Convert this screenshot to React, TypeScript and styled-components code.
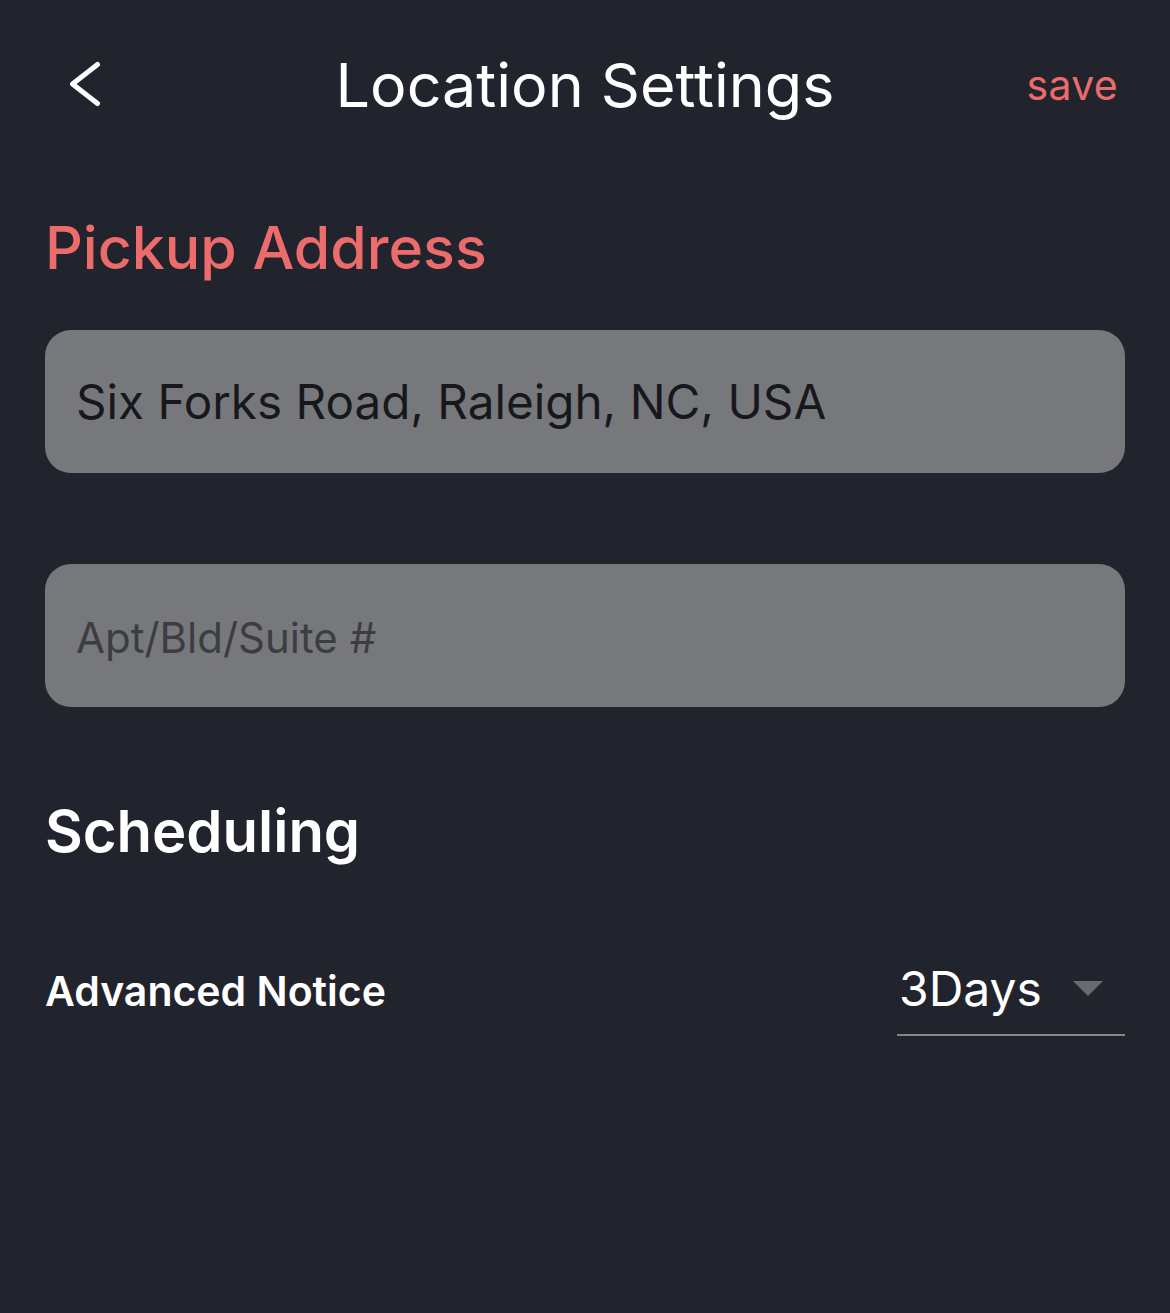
import styled, { createGlobalStyle } from 'styled-components'

const GlobalStyle = createGlobalStyle`
  html, body {
    margin: 0;
    padding: 0;
    background: #22242d;
  }
  body {
    font-family: Inter, "Noto Sans", sans-serif;
    -webkit-font-smoothing: antialiased;
  }
`

const Screen = styled.div`
  width: 1170px;
  min-height: 1313px;
  background: #22242d;
  color: #ffffff;
  box-sizing: border-box;
`

const Header = styled.header`
  position: relative;
  height: 170px;
  display: flex;
  align-items: center;
  justify-content: space-between;
  padding: 0 52px 0 62px;
`

const BackButton = styled.button`
  background: none;
  border: 0;
  padding: 0;
  width: 48px;
  height: 48px;
  display: flex;
  cursor: pointer;
`

const Title = styled.h1`
  position: absolute;
  left: 0;
  right: 0;
  text-align: center;
  margin: 0;
  font-size: 61px;
  font-weight: 400;
  pointer-events: none;
`

const SaveLink = styled.span`
  color: #ec6b6b;
  font-size: 41px;
  font-weight: 400;
  letter-spacing: 0.3px;
`

const Body = styled.main`
  padding: 0 45px;
  display: flex;
  flex-direction: column;
`

const SectionTitle = styled.h2<{ $accent?: boolean }>`
  margin: 0;
  line-height: 72px;
  font-size: ${p => (p.$accent ? 59 : 58)}px;
  font-weight: ${p => (p.$accent ? 500 : 600)};
  color: ${p => (p.$accent ? '#ec6b6b' : '#ffffff')};
`

const FieldWrap = styled.div<{ $gap: number }>`
  margin-top: ${p => p.$gap}px;
`

const Field = styled.input`
  box-sizing: border-box;
  width: 100%;
  height: 143px;
  border: 0;
  border-radius: 26px;
  background: #77787c;
  padding: 0 31px;
  font-family: Inter, "Noto Sans", sans-serif;
  font-size: 47.6px;
  color: #17181c;
  outline: none;

  &::placeholder {
    color: #3c3d42;
    font-size: 42px;
  }
`

const Row = styled.div`
  display: flex;
  align-items: baseline;
  justify-content: space-between;
  margin-top: 92px;
`

const RowLabel = styled.span`
  font-size: 41px;
  font-weight: 600;
`

const Select = styled.div`
  width: 228px;
  box-sizing: border-box;
  display: flex;
  align-items: center;
  justify-content: space-between;
  padding: 0 22px 16px 2px;
  border-bottom: 2px solid #86878b;
  font-size: 48px;
`

export default function App() {
  return (
    <Screen>
      <GlobalStyle />
      <Header>
        <BackButton aria-label="back">
          <svg width="48" height="48" viewBox="0 0 48 48" fill="none">
            <path d="M35.5 3.5 L10.5 23 L35.5 42.5" stroke="#ffffff" strokeWidth="5" strokeLinecap="round" strokeLinejoin="round" />
          </svg>
        </BackButton>
        <Title>Location Settings</Title>
        <SaveLink>save</SaveLink>
      </Header>
      <Body>
        <SectionTitle $accent style={{ marginTop: 42 }}>Pickup Address</SectionTitle>
        <FieldWrap $gap={46}>
          <Field defaultValue="Six Forks Road, Raleigh, NC, USA" />
        </FieldWrap>
        <FieldWrap $gap={91}>
          <Field placeholder="Apt/Bld/Suite #" />
        </FieldWrap>
        <SectionTitle style={{ marginTop: 88 }}>Scheduling</SectionTitle>
        <Row>
          <RowLabel>Advanced Notice</RowLabel>
          <Select>
            <span>3Days</span>
            <svg width="30" height="15" viewBox="0 0 30 15">
              <path d="M0 0 L30 0 L15 15 Z" fill="#6a6b6e" />
            </svg>
          </Select>
        </Row>
      </Body>
    </Screen>
  )
}
